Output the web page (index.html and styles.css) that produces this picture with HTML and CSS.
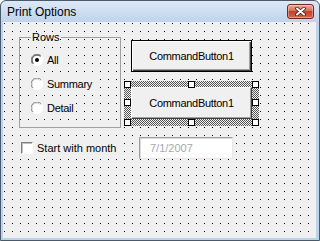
FILE: index.html
```html
<!DOCTYPE html>
<html lang="en">
<head>
  <meta charset="UTF-8">
  <meta name="viewport" content="width=device-width, initial-scale=1.0">
  <link rel="stylesheet" href="styles.css">
  <title>Print Options</title>
</head>
<body>
  <div class="window">
    <div class="titlebar">
      <span class="title">Print Options</span>
      <button class="close" aria-label="Close">
        <svg width="13" height="9" viewBox="0 0 13 9">
          <path d="M3 1.5 L10 7.5 M10 1.5 L3 7.5" stroke="#4a1a12" stroke-width="3.6" stroke-linecap="round"/>
          <path d="M3 1.5 L10 7.5 M10 1.5 L3 7.5" stroke="#fff" stroke-width="2" stroke-linecap="round"/>
        </svg>
      </button>
    </div>

    <div class="canvas">
      <div class="top-row">
        <fieldset class="frame">
          <legend>Rows</legend>
          <div class="options">
            <label class="radio">
              <svg width="12" height="12" viewBox="0 0 12 12">
                <circle cx="6" cy="6" r="5.5" fill="#fff"/>
                <path d="M1.8 10.2 A5.5 5.5 0 0 1 10.2 1.8" fill="none" stroke="#808080"/>
                <path d="M10.2 1.8 A5.5 5.5 0 0 1 1.8 10.2" fill="none" stroke="#fff"/>
                <path d="M2.5 9.5 A4.5 4.5 0 0 1 9.5 2.5" fill="none" stroke="#404040"/>
                <circle cx="6" cy="6" r="2" fill="#000"/>
              </svg>All
            </label>
            <label class="radio">
              <svg width="12" height="12" viewBox="0 0 12 12">
                <circle cx="6" cy="6" r="5.5" fill="#fff"/>
                <path d="M1.8 10.2 A5.5 5.5 0 0 1 10.2 1.8" fill="none" stroke="#808080"/>
                <path d="M10.2 1.8 A5.5 5.5 0 0 1 1.8 10.2" fill="none" stroke="#fff"/>
                <path d="M2.5 9.5 A4.5 4.5 0 0 1 9.5 2.5" fill="none" stroke="#d0d0d0"/>
              </svg>Summary
            </label>
            <label class="radio">
              <svg width="12" height="12" viewBox="0 0 12 12">
                <circle cx="6" cy="6" r="5.5" fill="#fff"/>
                <path d="M1.8 10.2 A5.5 5.5 0 0 1 10.2 1.8" fill="none" stroke="#808080"/>
                <path d="M10.2 1.8 A5.5 5.5 0 0 1 1.8 10.2" fill="none" stroke="#fff"/>
                <path d="M2.5 9.5 A4.5 4.5 0 0 1 9.5 2.5" fill="none" stroke="#d0d0d0"/>
              </svg>Detail
            </label>
          </div>
        </fieldset>

        <div class="buttons">
          <button class="cmd cmd-default">CommandButton1</button>
          <div class="selection">
            <button class="cmd">CommandButton1</button>
            <span class="handle h-tl"></span>
            <span class="handle h-tc"></span>
            <span class="handle h-tr"></span>
            <span class="handle h-ml"></span>
            <span class="handle h-mr"></span>
            <span class="handle h-bl"></span>
            <span class="handle h-bc"></span>
            <span class="handle h-br"></span>
          </div>
        </div>
      </div>

      <div class="bottom-row">
        <label class="check"><span class="box"></span>Start with month</label>
        <input class="textbox" type="text" value="7/1/2007" disabled>
      </div>
    </div>
  </div>
</body>
</html>
```

FILE: styles.css
```css
body {
  margin: 0;
  font-family: "Liberation Sans", Arial, sans-serif;
}
.window {
  width: 320px;
  height: 241px;
  box-sizing: border-box;
  border: 1px solid #4b5a6b;
  border-radius: 6px 6px 0 0;
  background: linear-gradient(#dde8f5, #bfd3eb 21px, #bcd1ea 21px);
  display: flex;
  flex-direction: column;
}
.titlebar {
  height: 21px;
  display: flex;
  align-items: flex-start;
  justify-content: space-between;
}
.title {
  font-size: 12px;
  line-height: 14px;
  margin: 4px 0 0 6px;
  color: #000;
}
.close {
  width: 27px;
  height: 15px;
  margin: 3px 5px 0 0;
  padding: 0;
  border: 1px solid #6e2a20;
  border-radius: 3px;
  background: linear-gradient(#eaa899, #d8705c 45%, #c5402b 50%, #d5664f);
  box-shadow: inset 0 0 0 1px rgba(255, 255, 255, 0.35);
  display: flex;
  align-items: center;
  justify-content: center;
}
.canvas {
  flex: 1;
  margin: 0 3px 2px 2px;
  padding: 9px 0 0 16px;
  background-color: #f0f0f0;
  background-image:
    linear-gradient(90deg, #f0f0f0 7px, transparent 7px),
    linear-gradient(180deg, #f0f0f0 7px, #000 7px);
  background-size: 8px 8px;
  background-position: 2px 2px;
  font-size: 11px;
  color: #000;
}
.top-row {
  display: flex;
  align-items: flex-start;
}
.frame {
  width: 102px;
  height: 97px;
  box-sizing: border-box;
  margin: 0;
  padding: 0;
  border: 1px solid #a0a0a0;
  min-width: 0;
}
.frame legend {
  margin-left: 11px;
  padding: 0 1px;
  font-size: 11px;
  line-height: 13px;
}
.options {
  display: flex;
  flex-direction: column;
  align-items: flex-start;
  padding: 4px 0 0 11px;
}
.radio {
  height: 18px;
  margin: 3px 0 3px -3px;
  padding: 0 3px;
  display: flex;
  align-items: center;
  gap: 4px;
  font-size: 11px;
  letter-spacing: -0.3px;
  background: #f0f0f0;
}
.buttons {
  margin-left: 3px;
  display: flex;
  flex-direction: column;
  align-items: flex-start;
}
.cmd {
  width: 121px;
  height: 32px;
  box-sizing: border-box;
  padding: 0;
  font-family: "Liberation Sans", Arial, sans-serif;
  font-size: 11px;
  letter-spacing: -0.3px;
  color: #000;
  background: #f0f0f0;
  border: 1px solid;
  border-color: #fff #404040 #404040 #fff;
  box-shadow: inset -1px -1px #a0a0a0;
}
.cmd-default {
  margin: 9px 0 0 7px;
  border-color: #000;
  box-shadow: inset 1px 1px #fff, inset -1px -1px #404040, inset -2px -2px #a0a0a0;
}
.selection {
  position: relative;
  margin-top: 9px;
  padding: 6px 7px 7px;
  background: repeating-conic-gradient(#555 0 25%, #f0f0f0 0 50%) 0 0 / 2px 2px;
}
.selection .cmd {
  display: block;
}
.handle {
  position: absolute;
  width: 7px;
  height: 7px;
  box-sizing: border-box;
  background: #fff;
  border: 1px solid #000;
}
.h-tl, .h-tc, .h-tr { top: 0; }
.h-bl, .h-bc, .h-br { bottom: 0; }
.h-ml, .h-mr { top: 18px; }
.h-tl, .h-ml, .h-bl { left: 0; }
.h-tr, .h-mr, .h-br { right: 0; }
.h-tc, .h-bc { left: 64px; }
.bottom-row {
  display: flex;
  align-items: center;
  margin-top: 9px;
}
.check {
  width: 104px;
  height: 18px;
  box-sizing: border-box;
  margin-left: -1px;
  padding-left: 3px;
  display: flex;
  align-items: center;
  gap: 4px;
  font-size: 11px;
  background: #f0f0f0;
}
.check .box {
  width: 12px;
  height: 12px;
  box-sizing: border-box;
  background: #fff;
  border: 1px solid;
  border-color: #808080 #fff #fff #808080;
  box-shadow: inset 1px 1px #c0c0c0;
}
.textbox {
  width: 94px;
  height: 22px;
  box-sizing: border-box;
  margin: 0 0 0 17px;
  padding: 0 0 0 10px;
  font-family: "Liberation Sans", Arial, sans-serif;
  font-size: 11px;
  color: #a8a8a8;
  background: #fff;
  border: 1px solid;
  border-color: #a0a0a0 #e8e8e8 #e8e8e8 #a0a0a0;
  box-shadow: inset 1px 1px #d8d8d8;
}
```
